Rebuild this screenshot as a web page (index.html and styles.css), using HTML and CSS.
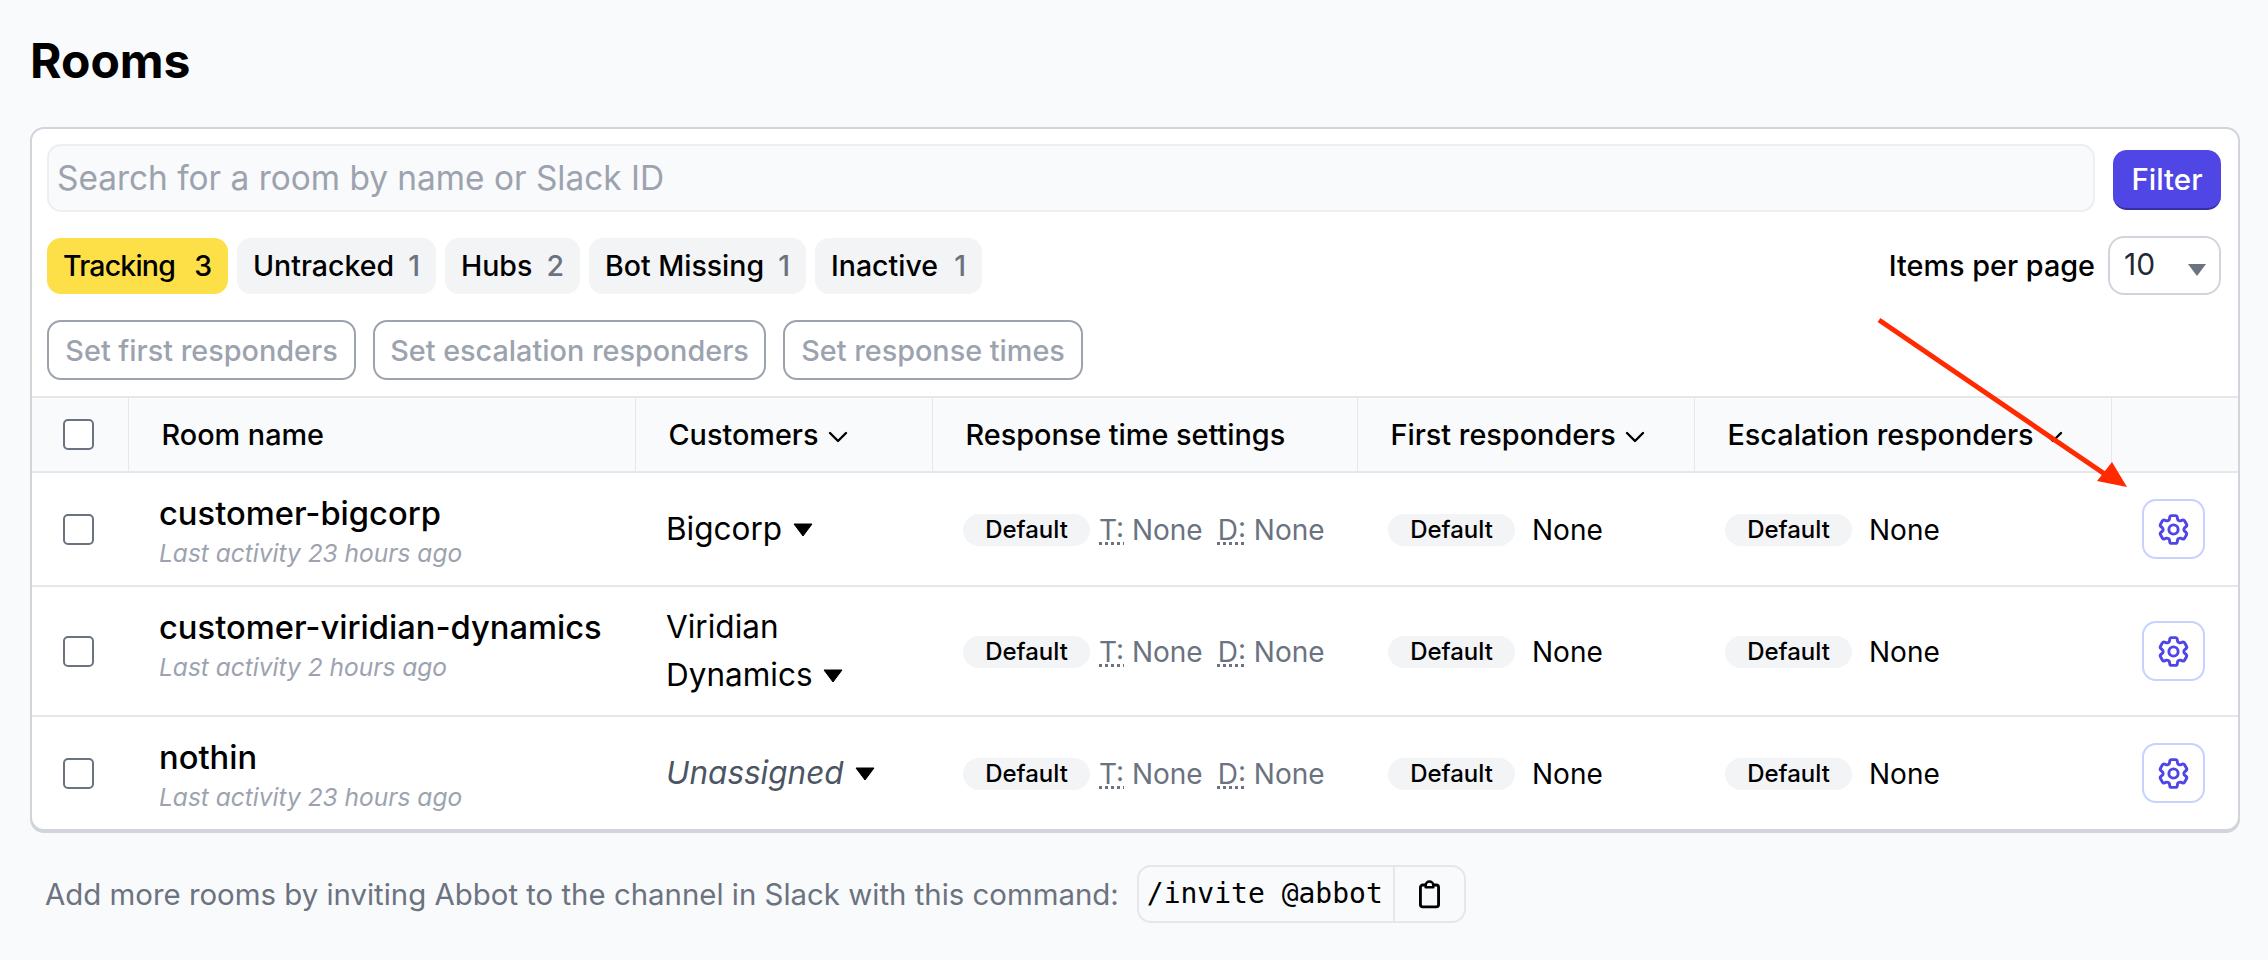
FILE: index.html
```html
<!DOCTYPE html>
<html lang="en">
<head>
  <meta charset="UTF-8">
  <title>Rooms</title>
  <link rel="stylesheet" href="styles.css">
</head>
<body>
  <svg class="defs" width="0" height="0">
    <symbol id="gear" viewBox="0 0 24 24">
      <path d="M9.594 3.94c.09-.542.56-.94 1.11-.94h2.593c.55 0 1.02.398 1.11.94l.213 1.281c.063.374.313.686.645.87.074.04.147.083.22.127.324.196.72.257 1.075.124l1.217-.456a1.125 1.125 0 011.37.49l1.296 2.247a1.125 1.125 0 01-.26 1.431l-1.003.827c-.293.24-.438.613-.431.992a6.759 6.759 0 010 .255c-.007.378.138.75.43.99l1.005.828c.424.35.534.954.26 1.43l-1.298 2.247a1.125 1.125 0 01-1.369.491l-1.217-.456c-.355-.133-.75-.072-1.076.124a6.57 6.57 0 01-.22.128c-.331.183-.581.495-.644.869l-.213 1.28c-.09.543-.56.941-1.11.941h-2.594c-.55 0-1.02-.398-1.11-.94l-.213-1.281c-.062-.374-.312-.686-.644-.87a6.52 6.52 0 01-.22-.127c-.325-.196-.72-.257-1.076-.124l-1.217.456a1.125 1.125 0 01-1.369-.49l-1.297-2.247a1.125 1.125 0 01.26-1.431l1.004-.827c.292-.24.437-.613.43-.992a6.932 6.932 0 010-.255c.007-.378-.138-.75-.43-.99l-1.004-.828a1.125 1.125 0 01-.26-1.43l1.297-2.247a1.125 1.125 0 011.37-.491l1.216.456c.356.133.751.072 1.076-.124.072-.044.146-.087.22-.128.332-.183.582-.495.644-.869l.214-1.281z" fill="none" stroke="currentColor" stroke-width="1.9" stroke-linejoin="round"/>
      <circle cx="12" cy="12" r="3" fill="none" stroke="currentColor" stroke-width="1.9"/>
    </symbol>
    <symbol id="chevron" viewBox="0 0 20 12">
      <path d="M2 2l8 8 8-8" fill="none" stroke="currentColor" stroke-width="2.400" stroke-linecap="round" stroke-linejoin="round"/>
    </symbol>
    <symbol id="caret" viewBox="0 0 20 14">
      <path d="M1 1h18L10 13z" fill="currentColor" stroke="currentColor" stroke-linejoin="round"/>
    </symbol>
  </svg>

  <h1 class="page-title">Rooms</h1>

  <div class="card">
    <div class="search-row">
      <input class="search" type="text" placeholder="Search for a room by name or Slack ID">
      <button class="filter-btn">Filter</button>
    </div>

    <div class="tabs-row">
      <div class="tabs">
        <a class="tab active"><span class="tab-label">Tracking</span> <span class="count">3</span></a>
        <a class="tab"><span class="tab-label">Untracked</span> <span class="count">1</span></a>
        <a class="tab"><span class="tab-label">Hubs</span> <span class="count">2</span></a>
        <a class="tab"><span class="tab-label">Bot Missing</span> <span class="count">1</span></a>
        <a class="tab"><span class="tab-label">Inactive</span> <span class="count">1</span></a>
      </div>
      <div class="per-page">
        <span>Items per page</span>
        <div class="select">10 <span class="select-arrow"></span></div>
      </div>
    </div>

    <div class="actions">
      <button class="action-btn">Set first responders</button>
      <button class="action-btn">Set escalation responders</button>
      <button class="action-btn">Set response times</button>
    </div>

    <table class="rooms">
      <colgroup>
        <col class="c-check"><col class="c-name"><col class="c-cust"><col class="c-times"><col class="c-first"><col class="c-esc"><col class="c-gear">
      </colgroup>
      <thead>
        <tr>
          <th class="check-cell"><span class="checkbox"></span></th>
          <th>Room name</th>
          <th>Customers <svg class="chevron"><use href="#chevron"/></svg></th>
          <th>Response time settings</th>
          <th>First responders <svg class="chevron"><use href="#chevron"/></svg></th>
          <th>Escalation responders <svg class="chevron"><use href="#chevron"/></svg></th>
          <th></th>
        </tr>
      </thead>
      <tbody>
        <tr>
          <td class="check-cell"><span class="checkbox"></span></td>
          <td class="name-cell">
            <div class="room-name">customer-bigcorp</div>
            <div class="activity">Last activity 23 hours ago</div>
          </td>
          <td class="cust-cell">Bigcorp <svg class="caret"><use href="#caret"/></svg></td>
          <td><span class="pill tight">Default</span><abbr class="abbr" title="Target">T:</abbr> <span class="muted">None</span><abbr class="abbr second" title="Deadline">D:</abbr> <span class="muted">None</span></td>
          <td><span class="pill">Default</span><span class="plain">None</span></td>
          <td><span class="pill">Default</span><span class="plain">None</span></td>
          <td class="gear-cell"><button class="gear-btn"><svg class="gear"><use href="#gear"/></svg></button></td>
        </tr>
        <tr>
          <td class="check-cell"><span class="checkbox"></span></td>
          <td class="name-cell">
            <div class="room-name">customer-viridian-dynamics</div>
            <div class="activity">Last activity 2 hours ago</div>
          </td>
          <td class="cust-cell">Viridian <span class="nowrap">Dynamics <svg class="caret"><use href="#caret"/></svg></span></td>
          <td><span class="pill tight">Default</span><abbr class="abbr" title="Target">T:</abbr> <span class="muted">None</span><abbr class="abbr second" title="Deadline">D:</abbr> <span class="muted">None</span></td>
          <td><span class="pill">Default</span><span class="plain">None</span></td>
          <td><span class="pill">Default</span><span class="plain">None</span></td>
          <td class="gear-cell"><button class="gear-btn"><svg class="gear"><use href="#gear"/></svg></button></td>
        </tr>
        <tr>
          <td class="check-cell"><span class="checkbox"></span></td>
          <td class="name-cell">
            <div class="room-name">nothin</div>
            <div class="activity">Last activity 23 hours ago</div>
          </td>
          <td class="cust-cell"><em class="unassigned">Unassigned</em> <svg class="caret"><use href="#caret"/></svg></td>
          <td><span class="pill tight">Default</span><abbr class="abbr" title="Target">T:</abbr> <span class="muted">None</span><abbr class="abbr second" title="Deadline">D:</abbr> <span class="muted">None</span></td>
          <td><span class="pill">Default</span><span class="plain">None</span></td>
          <td><span class="pill">Default</span><span class="plain">None</span></td>
          <td class="gear-cell"><button class="gear-btn"><svg class="gear"><use href="#gear"/></svg></button></td>
        </tr>
      </tbody>
    </table>
  </div>

  <div class="footer">
    <span>Add more rooms by inviting Abbot to the channel in Slack with this command:</span>
    <div class="copy-box">
      <code class="command">/invite @abbot</code>
      <button class="copy-btn">
        <svg class="clip" viewBox="0 0 22 30">
          <path d="M7 5H4a2.500 2.500 0 00-2.500 2.500v18A2.500 2.500 0 004 28h14a2.500 2.500 0 002.500-2.500v-18A2.500 2.500 0 0018 5h-3" fill="none" stroke="currentColor" stroke-width="3"/>
          <path d="M7 7.500V5a4 3.500 0 018 0v2.500z" fill="none" stroke="currentColor" stroke-width="2.600" stroke-linejoin="round"/>
        </svg>
      </button>
    </div>
  </div>

  <!-- annotation drawn on top of the screenshot -->
  <svg class="arrow" width="2268" height="960" viewBox="0 0 2268 960">
    <path d="M1879 320L2112 479" stroke="#ff2a00" stroke-width="5" fill="none"/>
    <path d="M2127 487L2097 481L2112 462z" fill="#ff2a00"/>
  </svg>
</body>
</html>
```

FILE: styles.css
```css
body{
  margin: 0;
  padding: 0 28px 0 30px;
  font-family: "Inter", "Liberation Sans", sans-serif;
  font-size: 28px;
  background-color: #f9fafb;
  color: #000;
}
.defs{
  position: absolute;
}
.page-title{
  margin: 0;
  padding-top: 32px;
  height: 127px;
  box-sizing: border-box;
  font-size: 48px;
  line-height: 58px;
  font-weight: 700;
}

/* card */
.card{
  background-color: #fff;
  border: 2px solid #d1d5db;
  border-radius: 14px;
  box-shadow: 0 2px 0 #d1d5db;
  overflow: hidden;
}
.search-row{
  display: flex;
  align-items: flex-end;
  gap: 18px;
  padding: 15px 17px 0 15px;
}
.search{
  flex: 1;
  height: 68px;
  box-sizing: border-box;
  padding: 0 8px;
  border: 2px solid #eceef1;
  border-radius: 14px;
  background-color: #f9fafb;
  font: inherit;
  font-size: 33.400px;
}
.search::placeholder{
  color: #9ca3af;
  opacity: 1;
}
.filter-btn{
  width: 108px;
  height: 60px;
  margin-bottom: 2px;
  border: 0;
  border-bottom: 2px solid #3730a3;
  border-radius: 14px;
  background-color: #4f46e5;
  color: #fff;
  font: inherit;
  font-size: 29.500px;
  font-weight: 500;
}
.tabs-row{
  display: flex;
  align-items: center;
  justify-content: space-between;
  margin-top: 24px;
  padding: 0 17px 0 15px;
}
.tabs{
  display: grid;
  grid-template-columns: 181px 199px 135px 217px 167px;
  gap: 9px;
}
.tab{
  display: flex;
  align-items: center;
  justify-content: space-between;
  height: 56px;
  padding: 0 16px;
  border-radius: 14px;
  background-color: #f3f4f6;
  font-weight: 500;
  font-size: 28.500px;
}
.tab.active{
  background-color: #fde047;
}
.tab.active .tab-label{
  letter-spacing: -.8px;
}
.tab .count{
  color: #6b7280;
}
.tab.active .count{
  color: #000;
}
.per-page{
  display: flex;
  align-items: center;
  gap: 13px;
  font-weight: 500;
  font-size: 28.800px;
}
.select{
  position: relative;
  width: 113px;
  height: 59px;
  box-sizing: border-box;
  padding: 0 14px;
  border: 2px solid #d1d5db;
  border-radius: 16px;
  line-height: 53px;
  color: #1f2937;
  font-weight: 400;
  font-size: 30px;
}
.select-arrow{
  position: absolute;
  right: 13px;
  top: 26px;
  border-top: 12px solid #6b7280;
  border-left: 9px solid transparent;
  border-right: 9px solid transparent;
}
.actions{
  display: grid;
  grid-template-columns: 309px 393px 300px;
  gap: 17px;
  margin-top: 25px;
  padding: 0 15px;
}
.action-btn{
  height: 60px;
  padding: 0;
  border: 2px solid #9ca3af;
  border-radius: 14px;
  background-color: #fff;
  color: #9ca3af;
  font: inherit;
  font-size: 28.800px;
  font-weight: 500;
}

/* table */
.rooms{
  width: 100%;
  margin-top: 16px;
  table-layout: fixed;
  border-collapse: collapse;
}
.c-check{ width: 96px; }
.c-name{ width: 507px; }
.c-cust{ width: 297px; }
.c-times{ width: 425px; }
.c-first{ width: 337px; }
.c-esc{ width: 417px; }
.c-gear{ width: 127px; }
th{
  height: 73px;
  padding: 0 0 0 33px;
  border-top: 2px solid #e5e7eb;
  border-bottom: 2px solid #e5e7eb;
  border-left: 1px solid #e5e7eb;
  background-color: #f9fafb;
  text-align: left;
  font-size: 28.800px;
  font-weight: 500;
  white-space: nowrap;
}
th:first-child{
  border-left: 0;
}
td{
  padding: 16px 0 16px 31px;
  border-bottom: 2px solid #e5e7eb;
}
tbody tr:last-child td{
  border-bottom: 0;
}
th.check-cell,
td.check-cell{
  padding: 0 0 0 31px;
}
.checkbox{
  display: block;
  width: 31px;
  height: 31px;
  box-sizing: border-box;
  border: 2px solid #6b7280;
  border-radius: 5px;
  background-color: #fff;
}
.chevron{
  width: 20px;
  height: 12px;
  margin-left: 2px;
  vertical-align: middle;
}
td.name-cell{
  vertical-align: top;
  padding: 20px 0 12px 31px;
}
.room-name{
  font-size: 32.700px;
  font-weight: 500;
  line-height: 40px;
  white-space: nowrap;
}
.activity{
  font-size: 24.500px;
  font-style: italic;
  line-height: 40px;
  color: #9ca3af;
}
td.cust-cell{
  padding-right: 20px;
  font-size: 31.500px;
  line-height: 48px;
}
.nowrap{
  white-space: nowrap;
}
.unassigned{
  color: #4b5563;
}
.caret{
  width: 20px;
  height: 14px;
  margin-left: 2px;
  vertical-align: 3px;
}
.pill{
  display: inline-block;
  width: 127px;
  height: 32px;
  margin-right: 17px;
  border-radius: 16px;
  background-color: #f3f4f6;
  text-align: center;
  line-height: 32px;
  font-size: 24px;
  font-weight: 500;
  vertical-align: middle;
}
.pill.tight{
  margin-right: 9px;
}
.abbr{
  color: #6b7280;
  text-decoration: underline dotted;
  vertical-align: middle;
}
.abbr.second{
  margin-left: 15px;
}
.muted{
  color: #6b7280;
  vertical-align: middle;
}
.plain{
  vertical-align: middle;
}
td.gear-cell{
  padding-left: 31px;
}
.gear-btn{
  display: flex;
  align-items: center;
  justify-content: center;
  width: 63px;
  height: 60px;
  padding: 0;
  border: 2px solid #c7d2fe;
  border-radius: 14px;
  background-color: #fff;
  color: #4f46e5;
}
.gear{
  width: 37px;
  height: 37px;
}

/* footer */
.footer{
  display: flex;
  align-items: center;
  gap: 18px;
  margin-top: 34px;
  padding-left: 15px;
  color: #6b7280;
  font-size: 29.400px;
}
.copy-box{
  display: flex;
  align-items: stretch;
  height: 58px;
  box-sizing: border-box;
  border: 2px solid #e5e7eb;
  border-radius: 14px;
}
.command{
  padding: 0 10px 0 8px;
  font-family: "DejaVu Sans Mono", monospace;
  font-size: 28px;
  line-height: 54px;
  color: #000;
}
.copy-btn{
  width: 71px;
  padding: 0;
  border: 0;
  border-left: 2px solid #e5e7eb;
  background: none;
  color: #000;
}
.clip{
  width: 21px;
  height: 29px;
  vertical-align: middle;
}

/* red arrow sits over the table */
.arrow{
  position: absolute;
  left: 0;
  top: 0;
  pointer-events: none;
}
```
